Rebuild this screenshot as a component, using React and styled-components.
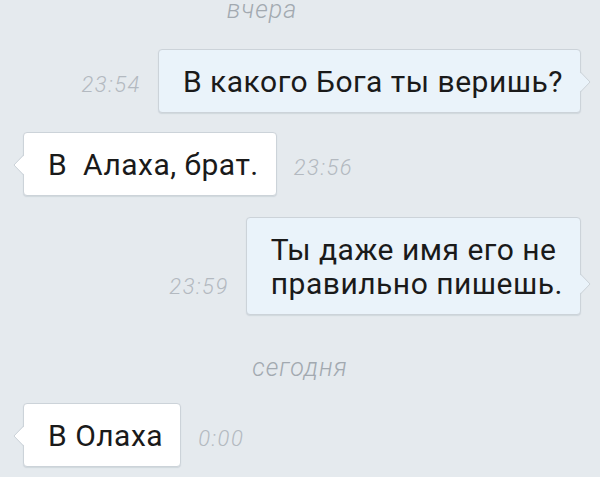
import React from "react";
import styled, { createGlobalStyle } from "styled-components";

const Global = createGlobalStyle`
  html, body { margin: 0; padding: 0; }
  body {
    background: #e5eaee;
    font-family: Roboto, "Liberation Sans", sans-serif;
    overflow: hidden;
  }
`;

const Page = styled.div`
  width: 600px;
  height: 477px;
  overflow: hidden;
  display: flex;
  flex-direction: column;
  background: #e5eaee;
`;

const DateLabel = styled.div`
  font-family: Roboto, "Liberation Sans", sans-serif;
  font-style: italic;
  font-weight: 300;
  font-size: 25px;
  line-height: ${(p) => p.$lh || 24}px;
  letter-spacing: 1px;
  color: #a2a9b0;
  text-align: center;
  margin-top: ${(p) => p.$top}px;
  margin-bottom: ${(p) => p.$bottom}px;
  padding-right: ${(p) => p.$shift || 0}px;
`;

const Row = styled.div`
  display: flex;
  align-items: flex-end;
  gap: 17px;
  justify-content: ${(p) => (p.$out ? "flex-end" : "flex-start")};
  padding: ${(p) => (p.$out ? "0 19px 0 0" : "0 0 0 23px")};
  margin-bottom: ${(p) => p.$gap || 0}px;
`;

const Time = styled.span`
  font-family: Roboto, "Liberation Sans", sans-serif;
  font-style: italic;
  font-weight: 300;
  font-size: 22px;
  line-height: 22px;
  letter-spacing: 1.5px;
  color: #b3b9c0;
  padding-bottom: 17px;
`;

const Bubble = styled.div`
  position: relative;
  background: ${(p) => (p.$out ? "#eaf3fa" : "#ffffff")};
  border: 1px solid #ccd3d9;
  border-radius: 4px;
  box-shadow: 0 1px 1px rgba(60, 80, 100, 0.12);
  padding: 15px 17px 13px 24px;
  font-size: 30px;
  line-height: 34px;
  letter-spacing: 0.5px;
  color: #1a1a1a;
  white-space: pre-line;
`;

const TailSvg = styled.svg`
  position: absolute;
  bottom: 20px;
  ${(p) => (p.$out ? "right: -11px;" : "left: -11px; transform: scaleX(-1);")}
  width: 11px;
  height: 20px;
  overflow: visible;
`;

function Tail({ out }) {
  const fill = out ? "#eaf3fa" : "#ffffff";
  return (
    <TailSvg $out={out} viewBox="0 0 11 20">
      <polygon points="-0.5,0 10,10 -0.5,20" fill={fill} />
      <path d="M0.5,0 L10,10 L0.5,20" fill="none" stroke="#ccd3d9" strokeWidth="1" strokeLinejoin="round" />
    </TailSvg>
  );
}

function Message({ out, time, text, gap }) {
  return (
    <Row $out={out} $gap={gap}>
      {out && <Time>{time}</Time>}
      <Bubble $out={out}>
        {text}
        <Tail out={out} />
      </Bubble>
      {!out && <Time>{time}</Time>}
    </Row>
  );
}

export default function App() {
  return (
    <Page>
      <Global />
      <DateLabel $top={0} $lh={20} $bottom={29} $shift={76}>вчера</DateLabel>
      <Message out time="23:54" text="В какого Бога ты веришь?" gap={19} />
      <Message time="23:56" text={"В\u00a0 Алаха, брат."} gap={21} />
      <Message out time="23:59" text={"Ты даже имя его не\nправильно пишешь."} />
      <DateLabel $top={41} $bottom={23}>сегодня</DateLabel>
      <Message time="0:00" text="В Олаха" />
    </Page>
  );
}
